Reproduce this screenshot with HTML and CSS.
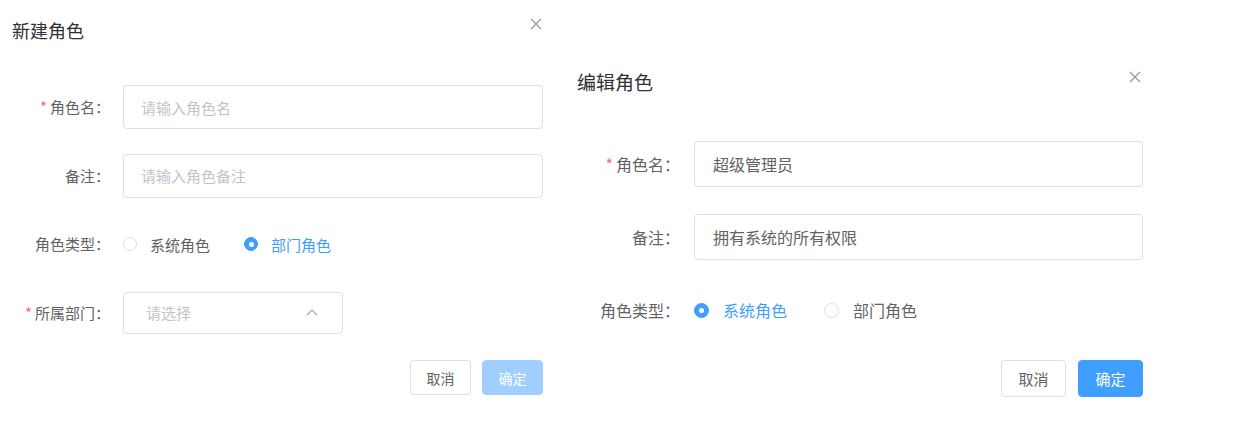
FILE: index.html
```html
<!DOCTYPE html>
<html lang="zh-CN">
<head>
    <meta charset="UTF-8">
    <meta name="viewport" content="width=device-width, initial-scale=1.0">
    <title>角色管理</title>
    <link rel="stylesheet" href="styles.css">
</head>
<body>
    <div class="page">
        <!-- 新建角色 -->
        <div class="dialog dialog-new">
            <div class="dialog-header">
                <span class="dialog-title">新建角色</span>
                <button class="dialog-close" type="button" aria-label="关闭">
                    <svg viewBox="0 0 12 12" width="12" height="12"><path d="M1 1 L11 11 M11 1 L1 11" /></svg>
                </button>
            </div>
            <form class="role-form">
                <div class="form-item">
                    <label class="form-label is-required">角色名：</label>
                    <div class="form-content">
                        <input class="text-input" type="text" placeholder="请输入角色名">
                    </div>
                </div>
                <div class="form-item">
                    <label class="form-label">备注：</label>
                    <div class="form-content">
                        <input class="text-input" type="text" placeholder="请输入角色备注">
                    </div>
                </div>
                <div class="form-item">
                    <label class="form-label">角色类型：</label>
                    <div class="form-content">
                        <span class="radio"><span class="radio-dot"></span><span class="radio-text">系统角色</span></span>
                        <span class="radio is-checked"><span class="radio-dot"></span><span class="radio-text">部门角色</span></span>
                    </div>
                </div>
                <div class="form-item">
                    <label class="form-label is-required">所属部门：</label>
                    <div class="form-content">
                        <div class="select">
                            <span class="select-placeholder">请选择</span>
                            <svg class="select-arrow" viewBox="0 0 12 7" width="12" height="7"><path d="M1 6 L6 1 L11 6" /></svg>
                        </div>
                    </div>
                </div>
            </form>
            <div class="dialog-footer">
                <button class="btn" type="button">取消</button>
                <button class="btn btn-primary is-disabled" type="button">确定</button>
            </div>
        </div>

        <!-- 编辑角色 -->
        <div class="dialog dialog-edit">
            <div class="dialog-header">
                <span class="dialog-title">编辑角色</span>
                <button class="dialog-close" type="button" aria-label="关闭">
                    <svg viewBox="0 0 12 12" width="12" height="12"><path d="M1 1 L11 11 M11 1 L1 11" /></svg>
                </button>
            </div>
            <form class="role-form">
                <div class="form-item">
                    <label class="form-label is-required">角色名：</label>
                    <div class="form-content">
                        <input class="text-input" type="text" value="超级管理员">
                    </div>
                </div>
                <div class="form-item">
                    <label class="form-label">备注：</label>
                    <div class="form-content">
                        <input class="text-input" type="text" value="拥有系统的所有权限">
                    </div>
                </div>
                <div class="form-item">
                    <label class="form-label">角色类型：</label>
                    <div class="form-content">
                        <span class="radio is-checked"><span class="radio-dot"></span><span class="radio-text">系统角色</span></span>
                        <span class="radio"><span class="radio-dot"></span><span class="radio-text">部门角色</span></span>
                    </div>
                </div>
            </form>
            <div class="dialog-footer">
                <button class="btn" type="button">取消</button>
                <button class="btn btn-primary" type="button">确定</button>
            </div>
        </div>
    </div>
</body>
</html>
```

FILE: styles.css
```css
* {
    margin: 0;
    padding: 0;
    box-sizing: border-box;
}

body {
    font-family: 'Noto Sans CJK SC', 'Noto Sans', sans-serif;
    background: #fff;
    color: #606266;
}

.page {
    display: flex;
    align-items: flex-start;
}

/* 对话框 */
.dialog {
    display: flex;
    flex-direction: column;
    background: #fff;
}

.dialog-header {
    display: flex;
    justify-content: space-between;
    align-items: flex-start;
}

.dialog-title {
    color: #303133;
    line-height: 20px;
}

.dialog-close {
    width: 12px;
    height: 12px;
    border: none;
    background: none;
    display: flex;
}

.dialog-close svg {
    stroke: #909399;
    stroke-width: 1.1;
    fill: none;
}

.form-item {
    display: flex;
}

.form-label {
    flex-shrink: 0;
    text-align: right;
}

.form-label.is-required::before {
    content: '*';
    color: #f56c6c;
    margin-right: 3px;
}

.form-content {
    flex: 1;
    display: flex;
    align-items: center;
}

.text-input {
    width: 100%;
    height: 100%;
    border: 1px solid #dcdfe6;
    border-radius: 4px;
    font-family: inherit;
    color: #606266;
    outline: none;
}

.text-input::placeholder {
    color: #c0c4cc;
}

/* 单选 */
.radio {
    display: flex;
    align-items: center;
}

.radio-dot {
    flex-shrink: 0;
    border: 1px solid #dcdfe6;
    border-radius: 50%;
    background: #fff;
    display: flex;
    align-items: center;
    justify-content: center;
}

.radio.is-checked .radio-dot {
    background: #409eff;
    border-color: #409eff;
}

.radio.is-checked .radio-dot::after {
    content: '';
    width: 5px;
    height: 5px;
    border-radius: 50%;
    background: #fff;
}

.radio.is-checked .radio-text {
    color: #409eff;
}

/* 下拉 */
.select {
    display: flex;
    align-items: center;
    justify-content: space-between;
    border: 1px solid #dcdfe6;
    border-radius: 4px;
    height: 100%;
    color: #c0c4cc;
}

.select-arrow {
    stroke: #a8abb2;
    stroke-width: 1.2;
    fill: none;
}

.dialog-footer {
    display: flex;
    justify-content: flex-end;
}

.btn {
    font-family: inherit;
    border: 1px solid #dcdfe6;
    border-radius: 4px;
    background: #fff;
    color: #606266;
}

.btn-primary {
    background: #409eff;
    border-color: #409eff;
    color: #fff;
}

.btn-primary.is-disabled {
    background: #a0cfff;
    border-color: #a0cfff;
}

/* 左：新建角色 */
.dialog-new {
    width: 560px;
    padding: 20px 17px 0 12px;
    font-size: 15px;
}

.dialog-new .dialog-title {
    font-size: 18px;
}

.dialog-new .dialog-close {
    margin-top: -2px;
    margin-right: 1px;
}

.dialog-new .role-form {
    margin-top: 45px;
}

.dialog-new .form-item {
    height: 44px;
    margin-bottom: 24.5px;
}

.dialog-new .form-label {
    width: 111px;
    padding-right: 13px;
    line-height: 44px;
}

.dialog-new .text-input {
    padding: 0 17px;
    font-size: 15px;
}

.dialog-new .radio-dot {
    width: 14px;
    height: 14px;
    margin-right: 13px;
}

.dialog-new .radio + .radio {
    margin-left: 34px;
}

.dialog-new .select {
    width: 220px;
    height: 42px;
    padding: 0 24px 0 22px;
}

.dialog-new .dialog-footer {
    gap: 11px;
    margin-top: 1px;
}

.dialog-new .btn {
    width: 61px;
    height: 35px;
    font-size: 14px;
}

/* 右：编辑角色 */
.dialog-edit {
    width: 600px;
    padding: 71px 17px 0 17px;
    font-size: 16px;
}

.dialog-edit .dialog-title {
    font-size: 19px;
    line-height: 22px;
}

.dialog-edit .dialog-close {
    margin-right: 2px;
}

.dialog-edit .role-form {
    margin-top: 48px;
}

.dialog-edit .form-item {
    height: 46px;
    margin-bottom: 27px;
}

.dialog-edit .form-label {
    width: 117px;
    padding-right: 14px;
    line-height: 46px;
}

.dialog-edit .text-input {
    padding: 0 18px;
    font-size: 16px;
}

.dialog-edit .radio-dot {
    width: 15px;
    height: 15px;
    margin-right: 14px;
}

.dialog-edit .radio + .radio {
    margin-left: 37px;
}

.dialog-edit .dialog-footer {
    gap: 12px;
}

.dialog-edit .btn {
    width: 65px;
    height: 37px;
    font-size: 15px;
}
```
